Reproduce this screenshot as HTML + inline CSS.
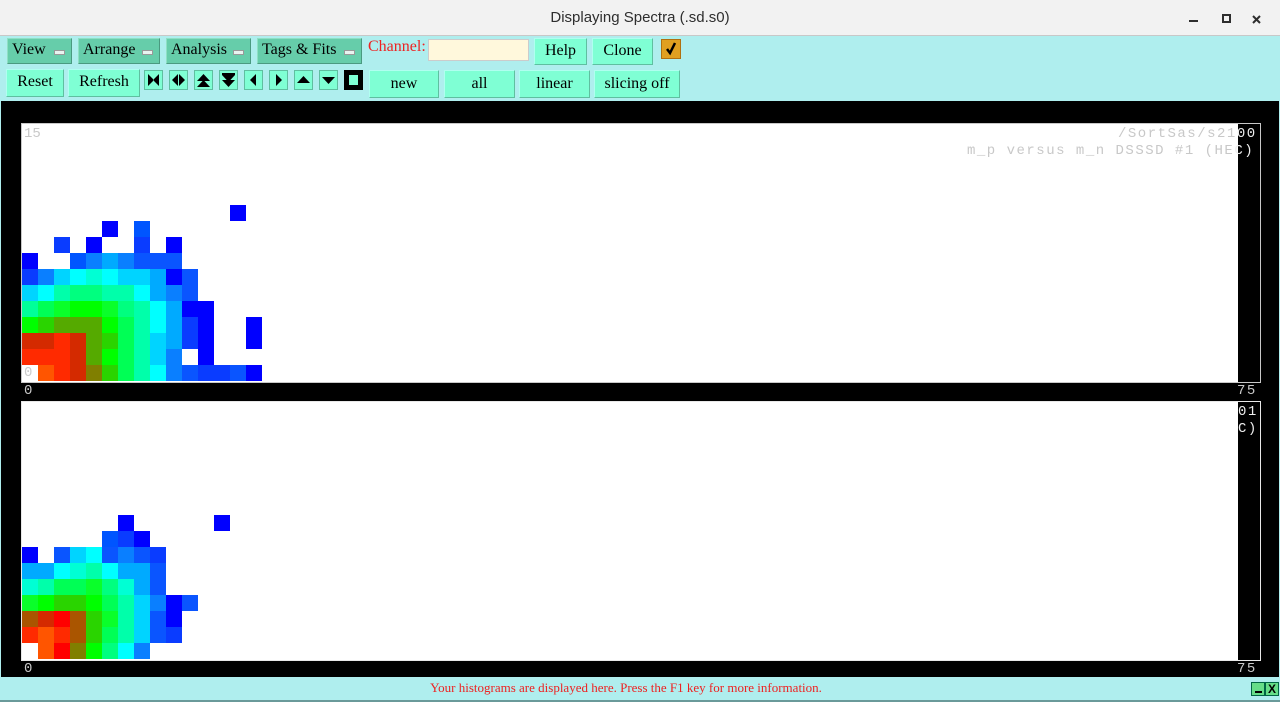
<!DOCTYPE html>
<html><head><meta charset="utf-8"><style>
*{margin:0;padding:0;box-sizing:border-box}
body{width:1280px;height:702px;overflow:hidden;background:#afeeee;font-family:"Liberation Serif",serif;position:relative}
.a{position:absolute}
.title{left:0;top:0;width:1280px;height:36px;background:#f2f2f2;border-bottom:1px solid #c8c8c8;font-family:"Liberation Sans",sans-serif;font-size:15px;color:#2e2e2e;text-align:center;line-height:36px}
.mb{background:#66cdaa;border:1px solid #4a9a80;border-top-color:#8fe0c4;border-left-color:#8fe0c4;font-size:16px;line-height:22px;padding-left:4px;color:#000;height:26px}
.mb i{position:absolute;right:6px;top:11px;width:11px;height:5px;background:#e8f4f0;border:1px solid #999}
.b{background:#7fffd4;border:1px solid #5fbfa0;border-top-color:#b0fff0;border-left-color:#b0fff0;font-size:16px;text-align:center;color:#000}
.ib{background:#7fffd4;border:1px solid #5fbfa0;width:19px;height:20px;top:70px}
.ib svg{display:block}
.mono{font-family:"Liberation Mono",monospace;font-size:14px;color:#c8c8c8;letter-spacing:1.5px;white-space:nowrap}
</style></head><body>
<div class="a title">Displaying Spectra (.sd.s0)</div>
<svg class="a" style="left:1186px;top:12px" width="80" height="14"><rect x="3" y="8" width="9" height="2" fill="#2e2e2e"/><rect x="37" y="3" width="7" height="7" fill="none" stroke="#2e2e2e" stroke-width="2"/><path d="M67 4l7 7M74 4l-7 7" stroke="#2e2e2e" stroke-width="2"/></svg>

<div class="a mb" style="left:7px;top:38px;width:65px">View<i></i></div>
<div class="a mb" style="left:78px;top:38px;width:82px">Arrange<i></i></div>
<div class="a mb" style="left:166px;top:38px;width:85px">Analysis<i></i></div>
<div class="a mb" style="left:257px;top:38px;width:105px">Tags &amp; Fits<i></i></div>
<div class="a" style="left:368px;top:38px;color:#ee2222;font-size:16px">Channel:</div>
<div class="a" style="left:428px;top:39px;width:101px;height:22px;background:#fff8dc;border:1px solid #ccc"></div>
<div class="a b" style="left:534px;top:38px;width:53px;height:27px;line-height:24px">Help</div>
<div class="a b" style="left:592px;top:38px;width:61px;height:27px;line-height:24px">Clone</div>
<div class="a" style="left:661px;top:39px;width:20px;height:20px;background:#e0a020;border:1px solid #b07010"><svg width="18" height="18" style="display:block"><path d="M5 9l3 4 5-10" fill="none" stroke="#000" stroke-width="2.5"/></svg></div>

<div class="a b" style="left:6px;top:69px;width:58px;height:28px;line-height:24px">Reset</div>
<div class="a b" style="left:68px;top:69px;width:72px;height:28px;line-height:24px">Refresh</div>
<div class="a ib" style="left:144px"><svg width="17" height="18"><path d="M3 3v12l6-6zM14 3v12l-6-6z"/></svg></div>
<div class="a ib" style="left:169px"><svg width="17" height="18"><path d="M8 3v12l-6-6zM9 3v12l6-6z"/></svg></div>
<div class="a ib" style="left:194px"><svg width="17" height="18"><path d="M2 10l6.5-7 6.5 7zM2 16l6.5-7 6.5 7z"/></svg></div>
<div class="a ib" style="left:219px"><svg width="17" height="18"><path d="M2 2h13v2H2zM2 4l6.5 7 6.5-7zM2 9l6.5 7 6.5-7z"/></svg></div>
<div class="a ib" style="left:244px"><svg width="17" height="18"><path d="M11 3v12l-6-6z"/></svg></div>
<div class="a ib" style="left:269px"><svg width="17" height="18"><path d="M6 3v12l6-6z"/></svg></div>
<div class="a ib" style="left:294px"><svg width="17" height="18"><path d="M2 12l6.5-7 6.5 7z"/></svg></div>
<div class="a ib" style="left:319px"><svg width="17" height="18"><path d="M2 6l6.5 7 6.5-7z"/></svg></div>
<div class="a ib" style="left:344px;background:#000;border-color:#000"><svg width="17" height="18"><rect x="4" y="4" width="9" height="10" fill="#7fffd4"/></svg></div>
<div class="a b" style="left:369px;top:70px;width:70px;height:28px;line-height:26px">new</div>
<div class="a b" style="left:444px;top:70px;width:71px;height:28px;line-height:26px">all</div>
<div class="a b" style="left:519px;top:70px;width:71px;height:28px;line-height:26px">linear</div>
<div class="a b" style="left:594px;top:70px;width:86px;height:28px;line-height:26px">slicing off</div>

<div class="a" style="left:1px;top:101px;width:1278px;height:576px;background:#000"></div>
<div class="a" style="left:21px;top:123px;width:1240px;height:260px;border:1px solid #c8c8c8;background:#fff"></div>
<div class="a" style="left:1238px;top:124px;width:22px;height:258px;background:#000"></div>
<div class="a" style="left:21px;top:401px;width:1240px;height:260px;border:1px solid #e8e8e8;background:#fff"></div>
<div class="a" style="left:1238px;top:402px;width:22px;height:258px;background:#000"></div>
<div id="g1" class="a" style="left:22px;top:205px"></div>
<div id="g2" class="a" style="left:22px;top:515px"></div>

<div class="a mono" style="left:24px;top:126px;letter-spacing:0">15</div>
<div class="a mono" style="left:1118px;top:126px">/SortSas/s21<span style="color:#eee">00</span></div>
<div class="a mono" style="left:967px;top:143px">m_p versus m_n DSSSD #1 (HE<span style="color:#eee">C)</span></div>
<div class="a mono" style="left:24px;top:365px;color:#ccc">0</div>
<div class="a mono" style="left:24px;top:383px">0</div>
<div class="a mono" style="left:1237px;top:383px">75</div>
<div class="a mono" style="left:1238px;top:404px;color:#eee">01</div>
<div class="a mono" style="left:1238px;top:421px;color:#eee">C)</div>
<div class="a mono" style="left:24px;top:661px">0</div>
<div class="a mono" style="left:1237px;top:661px">75</div>

<div class="a" style="left:0;top:678px;width:1252px;text-align:center;color:#ee2222;font-size:13px;line-height:20px">Your histograms are displayed here. Press the F1 key for more information.</div>
<div class="a" style="left:1251px;top:682px;width:14px;height:14px;background:#66dd88;border:1px solid #064"><div style="position:absolute;left:3px;top:8px;width:7px;height:2px;background:#000"></div></div>
<div class="a" style="left:1265px;top:682px;width:14px;height:14px;background:#66dd88;border:1px solid #064;font:bold 12px 'Liberation Sans',sans-serif;line-height:12px;text-align:center">X</div>
<div class="a" style="left:0;top:700px;width:1280px;height:2px;background:#6a9a9a"></div>

<script>
const C={b:'#0000ff',B:'#0a3cff',d:'#0a55ff',e:'#0055ff',m:'#0a7fff',s:'#00aaff',t:'#00d4ff',c:'#00ffff',q:'#00ffd4',a:'#00ffaa',k:'#00ff99',p:'#00ff7f',n:'#00ff55',l:'#0aff2a',g:'#00ff00',h:'#2ad400',o:'#55aa00',O:'#aa5500',y:'#807f00',R:'#d42a00',r:'#ff2a00',x:'#ff0000',f:'#ff5500'};
function draw(id,rows){let h='';rows.forEach((row,i)=>{[...row].forEach((ch,j)=>{if(C[ch])h+=`<div style="position:absolute;left:${j*16}px;top:${i*16}px;width:16px;height:16px;background:${C[ch]}"></div>`})});document.getElementById(id).innerHTML=h;}
draw('g1',[
'.............b',
'.....b.e',
'..B.b..B.b',
'b..emsmddd',
'Bmtcqcttsbd',
'tcappaacsmd',
'knlgglpacsbb',
'ghooognacsBb..b',
'RRrRohnatsBb..b',
'rrrRognatm.b',
'.frRyhnacmdBBdb']);
draw('g2',[
'......b.....b',
'.....eBb',
'b.dtcdmdB',
'sscqacssd',
'qannlpqsd',
'lghhgnatmbd',
'ORxOhlatdb',
'rfrOhnatdB',
'.fxygpcm']);
</script>
</body></html>
